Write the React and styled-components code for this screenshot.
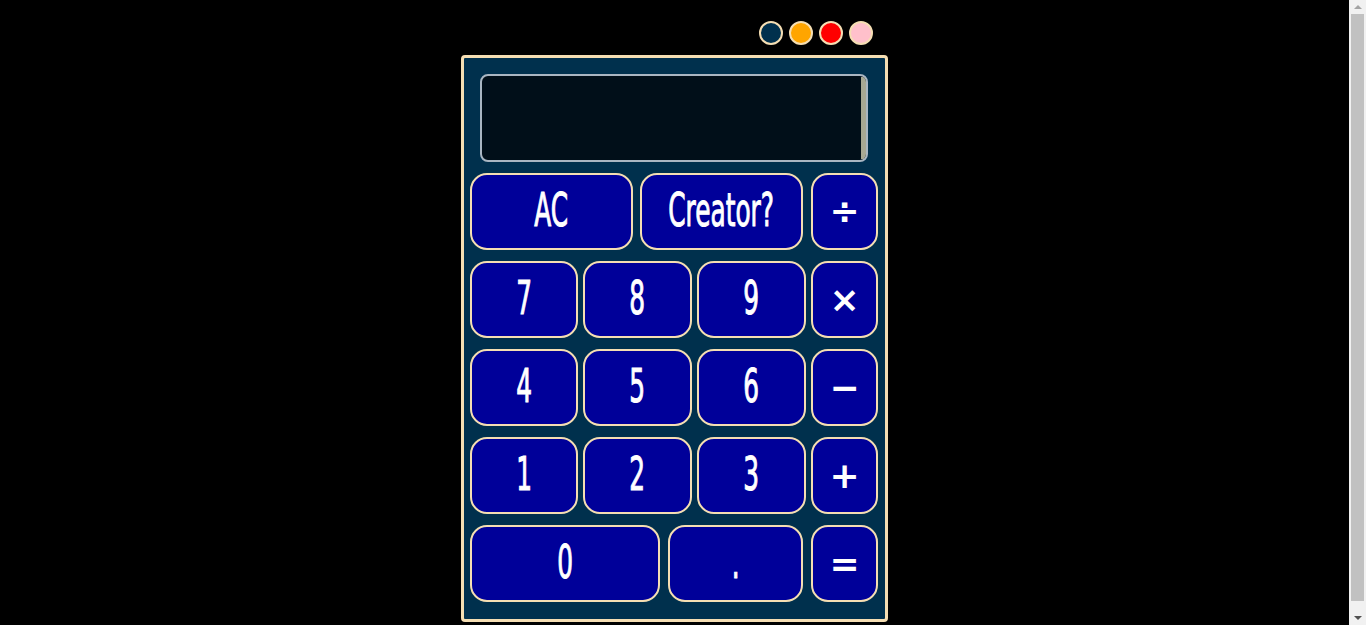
import React from "react";
import styled, { createGlobalStyle } from "styled-components";

const Global = createGlobalStyle`
  html, body { margin: 0; padding: 0; background: #000; }
  body { font-family: "Liberation Sans Narrow", "DejaVu Sans Condensed", "Liberation Sans", sans-serif; }
`;

const Page = styled.div`
  display: flex;
  flex-direction: column;
  align-items: center;
  padding-top: 21px;
  padding-bottom: 30px;
  margin-right: 17px;
`;

const ScrollBar = styled.div`
  position: fixed;
  top: 0;
  right: 0;
  bottom: 0;
  width: 17px;
  background: #f1f1f1;
  display: flex;
  flex-direction: column;
  align-items: center;
`;

const Arrow = styled.div`
  height: 14px;
  width: 100%;
  display: flex;
  align-items: center;
  justify-content: center;
  &::after {
    content: "";
    border-left: 4px solid transparent;
    border-right: 4px solid transparent;
    ${(p) => (p.$down ? "border-top: 4px solid #505050;" : "border-bottom: 4px solid #a3a3a3;")}
  }
`;

const Thumb = styled.div`
  flex: 1;
  width: 13px;
  margin: 0 0 10px;
  background: #c1c1c1;
`;

const ThemeBar = styled.div`
  width: 427px;
  display: flex;
  justify-content: flex-end;
  gap: 6px;
  padding-right: 15px;
  box-sizing: border-box;
  margin-bottom: 10px;
`;

const Dot = styled.button`
  width: 24px;
  height: 24px;
  border-radius: 50%;
  border: 2px solid #f5deb3;
  background: ${(p) => p.$color};
  padding: 0;
  cursor: pointer;
`;

const Calc = styled.div`
  width: 427px;
  box-sizing: border-box;
  border: 3px solid #f5deb3;
  border-radius: 4px;
  background: #00304d;
  padding: 16px 7px 17px 6px;
  display: flex;
  flex-direction: column;
  gap: 11px;
`;

const Display = styled.div`
  margin: 0 10px;
  height: 88px;
  box-sizing: border-box;
  border: 2px solid #a9b6c2;
  border-radius: 8px;
  background: #010f19;
  display: flex;
  justify-content: flex-end;
  overflow: hidden;
`;

const Track = styled.div`
  width: 5px;
  margin: 1px 0;
  background: #a7a893;
`;

const Row = styled.div`
  display: flex;
  gap: ${(p) => p.$gap}px;
`;

const Key = styled.button`
  width: ${(p) => p.$w}px;
  flex: none;
  height: 77px;
  box-sizing: border-box;
  border: 2px solid #f5deb3;
  border-radius: 17px;
  background: #000099;
  color: #fff;
  padding: 0;
  display: flex;
  align-items: center;
  justify-content: center;
  cursor: pointer;
`;

const Label = styled.span`
  display: inline-block;
  font-family: "Liberation Sans Narrow", "DejaVu Sans Condensed", "Liberation Sans", sans-serif;
  font-size: 46px;
  line-height: 1;
  transform: scaleX(0.6);
  -webkit-text-stroke: 1px #fff;
  margin-top: -3px;
`;

const Op = styled.span`
  display: inline-block;
  font-family: "DejaVu Sans", sans-serif;
  font-size: 36px;
  font-weight: bold;
  line-height: 1;
`;

const rows = [
  { gap: 7, keys: [["AC", 163], ["Creator?", 163]], op: "÷", opGap: 8 },
  { gap: 5, keys: [["7", 108], ["8", 109], ["9", 109]], op: "×", opGap: 5 },
  { gap: 5, keys: [["4", 108], ["5", 109], ["6", 109]], op: "−", opGap: 5 },
  { gap: 5, keys: [["1", 108], ["2", 109], ["3", 109]], op: "+", opGap: 5 },
  { gap: 8, keys: [["0", 190], [".", 135]], op: "=", opGap: 8 },
];

const OpWrap = styled.div`
  margin-left: ${(p) => p.$gap - p.$base}px;
  display: flex;
`;

export default function App() {
  return (
    <>
      <Global />
      <Page>
        <ThemeBar>
          {["#00304d", "#ffa500", "#ff0000", "#ffc0cb"].map((c) => (
            <Dot key={c} $color={c} aria-label="theme" />
          ))}
        </ThemeBar>
        <Calc>
          <Display>
            <Track />
          </Display>
          {rows.map((r, i) => (
            <Row key={i} $gap={r.gap}>
              {r.keys.map(([t, w]) => (
                <Key key={t} $w={w}>
                  <Label>{t}</Label>
                </Key>
              ))}
              <OpWrap $gap={r.opGap} $base={r.gap}>
                <Key $w={67}>
                  <Op>{r.op}</Op>
                </Key>
              </OpWrap>
            </Row>
          ))}
        </Calc>
      </Page>
      <ScrollBar>
        <Arrow />
        <Thumb />
        <Arrow $down />
      </ScrollBar>
    </>
  );
}
